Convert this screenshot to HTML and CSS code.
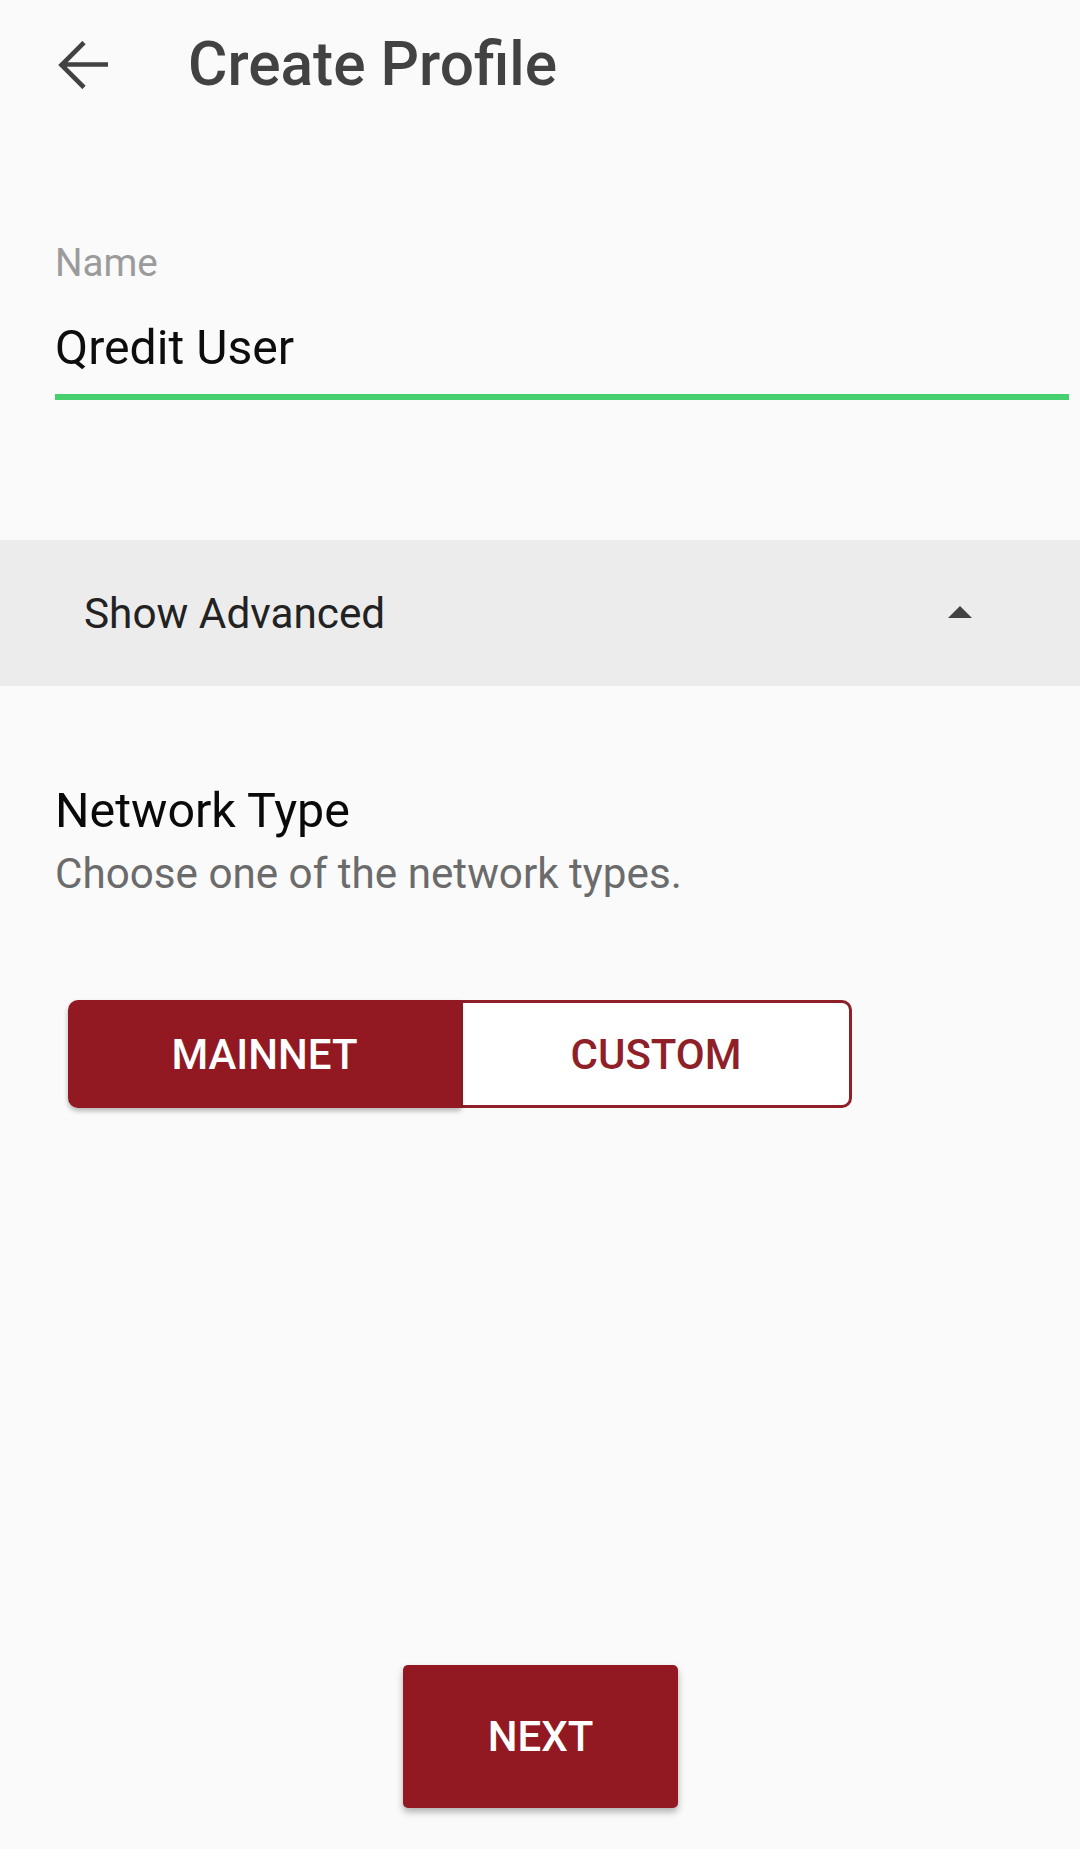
FILE: index.html
```html
<!DOCTYPE html>
<html lang="en">
<head>
<meta charset="utf-8">
<title>Create Profile</title>
<link rel="stylesheet" href="styles.css">
</head>
<body>
<div class="screen">
  <header class="appbar">
    <svg class="back" width="52" height="48" viewBox="0 0 52 48" aria-hidden="true">
      <path d="M51 23.5H5 M27 1.5L4.5 24L27 46.5" fill="none" stroke="#424242" stroke-width="4.6" stroke-linejoin="miter"/>
    </svg>
    <h1 class="title">Create Profile</h1>
  </header>

  <section class="field">
    <div class="field-label">Name</div>
    <div class="field-input">Qredit User</div>
  </section>

  <div class="advanced">
    <span class="advanced-text">Show Advanced</span>
    <span class="caret"></span>
  </div>

  <section class="network">
    <h2 class="network-title">Network Type</h2>
    <p class="network-sub">Choose one of the network types.</p>
    <div class="toggle">
      <button class="toggle-btn active">MAINNET</button>
      <button class="toggle-btn outline">CUSTOM</button>
    </div>
  </section>

  <footer class="footer">
    <button class="next">NEXT</button>
  </footer>
</div>
</body>
</html>
```

FILE: styles.css
```css
* { box-sizing: border-box; }

html, body {
  margin: 0;
  padding: 0;
  background: #fafafa;
}

body {
  font-family: Roboto, "Noto Sans", "Liberation Sans", sans-serif;
  color: #000;
}

.screen {
  display: flex;
  flex-direction: column;
  min-height: 1849px;
}

.appbar {
  height: 130px;
  display: flex;
  align-items: center;
  padding-left: 57px;
}

.back {
  display: block;
  flex: none;
}

.title {
  margin: 0 0 0 79px;
  font-size: 60.4px;
  font-weight: 500;
  color: #424242;
  line-height: 1.172;
}

.field {
  margin: 111px 11px 0 55px;
  border-bottom: 6px solid #45cf6d;
  padding-bottom: 18px;
}

.field-label {
  font-size: 38.6px;
  line-height: 44px;
  color: #9b9b9b;
}

.field-input {
  margin-top: 35px;
  font-size: 48.2px;
  line-height: 56px;
  color: #0d0d0d;
}

.advanced {
  margin-top: 140px;
  height: 146px;
  background: #ececec;
  display: flex;
  align-items: center;
  justify-content: space-between;
  padding: 0 108px 0 84px;
}

.advanced-text {
  font-size: 42.3px;
  color: #222;
}

.caret {
  width: 0;
  height: 0;
  border-left: 12px solid transparent;
  border-right: 12px solid transparent;
  border-bottom: 12px solid #424242;
  margin-top: -2px;
}

.network {
  padding-left: 55px;
}

.network-title {
  margin: 97px 0 0;
  font-size: 48.4px;
  font-weight: 400;
  line-height: 56px;
  color: #0a0a0a;
}

.network-sub {
  margin: 10px 0 0;
  font-size: 42.2px;
  line-height: 50px;
  color: #6b6b6b;
}

.toggle {
  display: flex;
  margin: 101px 0 0 13px;
}

.toggle-btn {
  width: 393px;
  height: 108px;
  font-family: Roboto, "Noto Sans", "Liberation Sans", sans-serif;
  font-size: 42px;
  font-weight: 500;
  border: 0;
  padding: 0;
  margin: 0;
}

.toggle-btn.active {
  background: #921922;
  color: #fff;
  border-radius: 10px 0 0 10px;
  box-shadow: 0 3px 5px rgba(0, 0, 0, 0.28);
  position: relative;
  z-index: 1;
}

.toggle-btn.outline {
  width: 391px;
  background: #fff;
  color: #8f1f28;
  border: 3px solid #8f1f28;
  border-left-width: 2px;
  border-radius: 0 10px 10px 0;
}

.footer {
  margin-top: auto;
  display: flex;
  justify-content: center;
  padding: 0 0 41px 1px;
}

.next {
  width: 275px;
  height: 143px;
  background: #921922;
  color: #fff;
  border: 0;
  border-radius: 5px;
  font-family: Roboto, "Noto Sans", "Liberation Sans", sans-serif;
  font-size: 42px;
  font-weight: 500;
  box-shadow: 0 4px 7px rgba(0, 0, 0, 0.3);
}
```
